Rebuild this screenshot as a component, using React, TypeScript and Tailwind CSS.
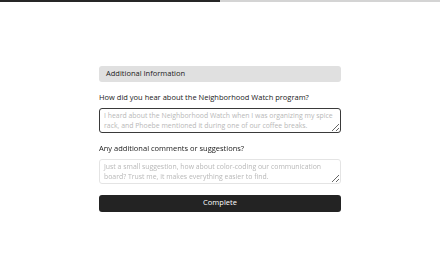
import React, { useState } from "react";

export default function App() {
  const [source, setSource] = useState("");
  const [comments, setComments] = useState("");

  return (
    <div className="h-screen flex flex-col bg-white" style={{ fontFamily: '"Open Sans", sans-serif' }}>
      <div className="h-[2px] w-full bg-[#d4d4d4] flex">
        <div className="h-full w-1/2 bg-[#262626]" />
      </div>

      <div className="flex-1 flex items-center justify-center">
        <div className="w-[242px] flex flex-col">
          <div className="h-[16px] rounded-[3px] bg-[#e0e0e0] px-[7px] flex items-center">
            <h2 className="text-[7.5px] leading-[11px] font-medium text-[#1a1a1a]">Additional Information</h2>
          </div>

          <label htmlFor="source" className="mt-[10px] text-[7.5px] leading-[11px] font-medium text-[#1a1a1a]">
            How did you hear about the Neighborhood Watch program?
          </label>
          <textarea
            id="source"
            autoFocus
            value={source}
            onChange={(e) => setSource(e.target.value)}
            placeholder="I heard about the Neighborhood Watch when I was organizing my spice rack, and Phoebe mentioned it during one of our coffee breaks."
            className="mt-[5px] h-[25px] w-full resize-y overflow-hidden rounded-[3px] border border-[#3a3a3a] pl-[4px] pr-[1px] py-[2px] text-[6.9px] leading-[10px] text-[#333] placeholder:text-[#b8b8b8] outline-none"
          />

          <label htmlFor="comments" className="mt-[10px] text-[7.5px] leading-[11px] font-medium text-[#1a1a1a]">
            Any additional comments or suggestions?
          </label>
          <textarea
            id="comments"
            value={comments}
            onChange={(e) => setComments(e.target.value)}
            placeholder="Just a small suggestion, how about color-coding our communication board? Trust me, it makes everything easier to find."
            className="mt-[5px] h-[25px] w-full resize-y overflow-hidden rounded-[3px] border border-[#e4e4e4] pl-[4px] pr-[1px] py-[2px] text-[6.9px] leading-[10px] text-[#333] placeholder:text-[#b8b8b8] outline-none"
          />

          <button
            type="button"
            className="mt-[11px] h-[17px] w-full rounded-[3px] bg-[#232323] text-[7.5px] text-white"
          >
            Complete
          </button>
        </div>
      </div>
    </div>
  );
}
